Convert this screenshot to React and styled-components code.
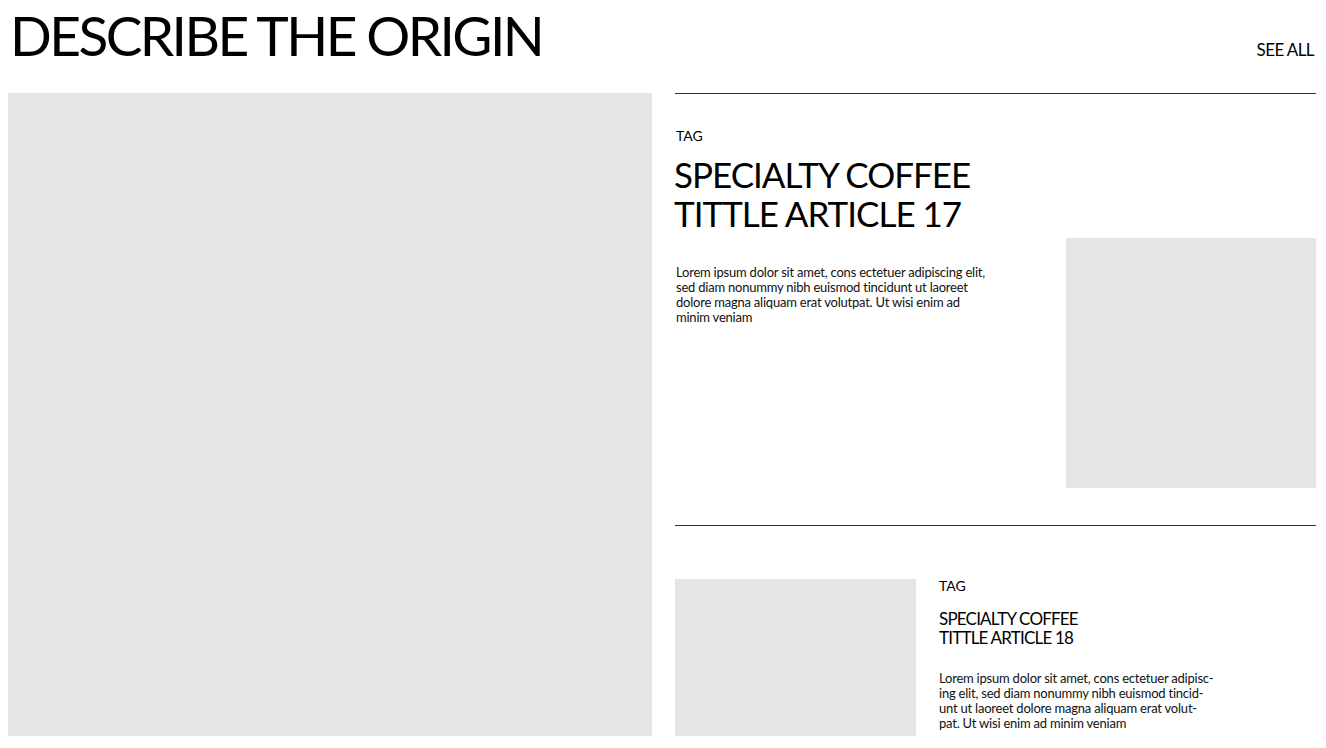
import styled, { createGlobalStyle } from "styled-components";

const GlobalStyle = createGlobalStyle`
  * { box-sizing: border-box; }
  body {
    margin: 0;
    background: #fff;
    color: #000;
    font-family: "Lato", "Noto Sans", sans-serif;
  }
`;

const Page = styled.div`
  width: 1326px;
  height: 748px;
  overflow: hidden;
  padding: 0 10px 0 8px;
`;

const Header = styled.header`
  display: flex;
  justify-content: space-between;
  align-items: flex-end;
  height: 93px;
  padding: 2px 2px 0 2px;
`;

const PageTitle = styled.h1`
  margin: 0 0 auto 0;
  font-size: 55px;
  font-weight: 400;
  line-height: 1.2;
  letter-spacing: -2.6px;
`;

const SeeAll = styled.a`
  font-size: 17px;
  line-height: 1;
  letter-spacing: -0.6px;
  margin-bottom: 35px;
  color: #000;
  text-decoration: none;
  cursor: pointer;
`;

const Body = styled.main`
  display: grid;
  grid-template-columns: 644px 1fr;
  column-gap: 23px;
`;

const Placeholder = styled.div`
  background: #e5e5e5;
  width: ${(p) => p.$w};
  height: ${(p) => p.$h};
  flex-shrink: 0;
`;

const Column = styled.section`
  display: flex;
  flex-direction: column;
`;

const Article = styled.article`
  display: flex;
  justify-content: space-between;
  border-top: 1px solid #333;
  padding: ${(p) => p.$pad};
  gap: 23px;
`;

const Text = styled.div`
  display: flex;
  flex-direction: column;
  padding-left: ${(p) => p.$indent || "0"};
`;

const Tag = styled.span`
  font-size: 14px;
  line-height: 1;
  margin: ${(p) => p.$m};
`;

const Heading = styled.h2`
  margin: 0;
  font-weight: 400;
  font-size: ${(p) => (p.$small ? "17px" : "35px")};
  line-height: ${(p) => (p.$small ? "19px" : "39px")};
  letter-spacing: ${(p) => (p.$small ? "-0.8px" : "-1px")};
  margin-left: ${(p) => (p.$small ? "0" : "-2px")};
`;

const Excerpt = styled.p`
  margin: ${(p) => p.$m};
  font-size: 13px;
  line-height: 15px;
  letter-spacing: -0.22px;
  color: #111;
`;

const Media = styled.div`
  padding-top: ${(p) => p.$top};
`;

const Spacer = styled.div`
  flex: 1;
`;

export default function App() {
  return (
    <>
      <GlobalStyle />
      <Page>
        <Header>
          <PageTitle>DESCRIBE THE ORIGIN</PageTitle>
          <SeeAll>SEE ALL</SeeAll>
        </Header>
        <Body>
          <Placeholder $w="644px" $h="643px" />
          <Column>
            <Article $pad="35px 0 37px 0">
              <Text $indent="1px">
                <Tag $m="0 0 12px 0">TAG</Tag>
                <Heading>
                  SPECIALTY COFFEE
                  <br />
                  TITTLE ARTICLE 17
                </Heading>
                <Excerpt $m="32px 0 0 0">
                  Lorem ipsum dolor sit amet, cons ectetuer adipiscing elit,
                  <br />
                  sed diam nonummy nibh euismod tincidunt ut laoreet
                  <br />
                  dolore magna aliquam erat volutpat. Ut wisi enim ad
                  <br />
                  minim veniam
                </Excerpt>
              </Text>
              <Media $top="109px">
                <Placeholder $w="250px" $h="250px" />
              </Media>
            </Article>
            <Article $pad="53px 0 0 0">
              <Placeholder $w="241px" $h="157px" />
              <Text>
                <Tag $m="0 0 16px 0">TAG</Tag>
                <Heading $small>
                  SPECIALTY COFFEE
                  <br />
                  TITTLE ARTICLE 18
                </Heading>
                <Excerpt $m="24px 0 0 0">
                  Lorem ipsum dolor sit amet, cons ectetuer adipisc-
                  <br />
                  ing elit, sed diam nonummy nibh euismod tincid-
                  <br />
                  unt ut laoreet dolore magna aliquam erat volut-
                  <br />
                  pat. Ut wisi enim ad minim veniam
                </Excerpt>
              </Text>
              <Spacer />
            </Article>
          </Column>
        </Body>
      </Page>
    </>
  );
}
